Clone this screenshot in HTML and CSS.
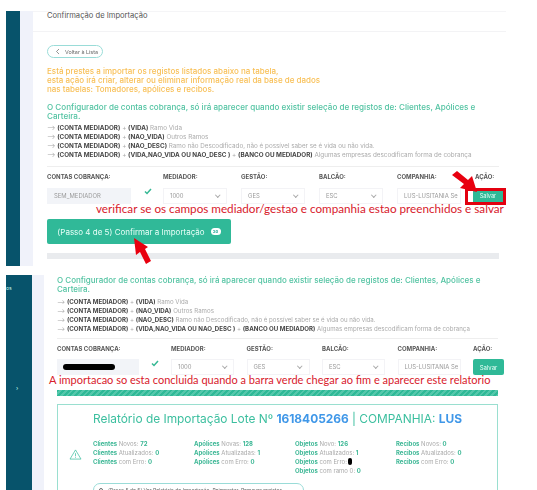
FILE: index.html
```html
<!DOCTYPE html>
<html lang="pt">
<head>
<meta charset="utf-8">
<title>Confirmação de Importação</title>
<link rel="stylesheet" href="styles.css">
</head>
<body>
<main class="page">
  <section class="shot shot-a">
    <div class="side side-a"></div>
    <div class="main-col">
      <header class="head">Confirmação de Importação</header>
      <div class="body body-a">
        <button class="back"><svg width="6" height="7" viewBox="0 0 6 7"><path d="M4 1 1.5 3.5 4 6" fill="none" stroke="#666" stroke-width=".7"/></svg><span>Voltar à Lista</span></button>
        <p class="warn">Está prestes a importar os registos listados abaixo na tabela,<br>esta ação irá criar, alterar ou eliminar informação real da base de dados<br>nas tabelas: Tomadores, apólices e recibos.</p>
        <p class="info">O Configurador de contas cobrança, só irá aparecer quando existir seleção de registos de: Clientes, Apólices e<br>Carteira.</p>
        <ul class="rules">
          <li>--&gt; <b>(CONTA MEDIADOR)</b> + <b>(VIDA)</b> Ramo Vida</li>
          <li>--&gt; <b>(CONTA MEDIADOR)</b> + <b>(NAO_VIDA)</b> Outros Ramos</li>
          <li>--&gt; <b>(CONTA MEDIADOR)</b> + <b>(NAO_DESC)</b> Ramo não Descodificado, não é possível saber se é vida ou não vida.</li>
          <li>--&gt; <b>(CONTA MEDIADOR)</b> + <b>(VIDA,NAO_VIDA OU NAO_DESC )</b> + <b>(BANCO OU MEDIADOR)</b> Algumas empresas descodificam forma de cobrança</li>
        </ul>
        <div class="form form-a">
          <div class="field f-conta"><label>CONTAS COBRANÇA:</label><div class="input filled">SEM_MEDIADOR</div></div>
          <svg class="check" width="8" height="7" viewBox="0 0 8 7"><path d="M1 3.5 3 5.5 7 1" fill="none" stroke="#35b894" stroke-width="1.5"/></svg>
          <div class="field f-sel"><label>MEDIADOR:</label><div class="input">1000<i class="chev"></i></div></div>
          <div class="field f-sel"><label>GESTÃO:</label><div class="input">GES<i class="chev"></i></div></div>
          <div class="field f-sel"><label>BALCÃO:</label><div class="input">ESC<i class="chev"></i></div></div>
          <div class="field f-sel"><label>COMPANHIA:</label><div class="input">LUS-LUSITANIA Se</div></div>
          <div class="field f-act"><label>AÇÃO:</label><div class="save-mark"><span class="save-gap"></span><span class="save-flat">Salvar</span></div></div>
        </div>
        <button class="confirm">(Passo 4 de 5) Confirmar a Importação <span class="pill">20</span></button>
        <div class="track"></div>
      </div>
    </div>
  </section>

  <section class="shot shot-b">
    <div class="side side-b"><span class="side-txt">os</span><span class="side-arrow">›</span></div>
    <div class="main-col">
      <div class="body body-b">
        <p class="info">O Configurador de contas cobrança, só irá aparecer quando existir seleção de registos de: Clientes, Apólices e<br>Carteira.</p>
        <ul class="rules">
          <li>--&gt; <b>(CONTA MEDIADOR)</b> + <b>(VIDA)</b> Ramo Vida</li>
          <li>--&gt; <b>(CONTA MEDIADOR)</b> + <b>(NAO_VIDA)</b> Outros Ramos</li>
          <li>--&gt; <b>(CONTA MEDIADOR)</b> + <b>(NAO_DESC)</b> Ramo não Descodificado, não é possível saber se é vida ou não vida.</li>
          <li>--&gt; <b>(CONTA MEDIADOR)</b> + <b>(VIDA,NAO_VIDA OU NAO_DESC )</b> + <b>(BANCO OU MEDIADOR)</b> Algumas empresas descodificam forma de cobrança</li>
        </ul>
        <div class="form form-b">
          <div class="field f-conta"><label>CONTAS COBRANÇA:</label><div class="input filled"><span class="redact"></span></div></div>
          <svg class="check" width="8" height="7" viewBox="0 0 8 7"><path d="M1 3.5 3 5.5 7 1" fill="none" stroke="#35b894" stroke-width="1.5"/></svg>
          <div class="field f-sel"><label>MEDIADOR:</label><div class="input">1000<i class="chev"></i></div></div>
          <div class="field f-sel"><label>GESTÃO:</label><div class="input">GES<i class="chev"></i></div></div>
          <div class="field f-sel"><label>BALCÃO:</label><div class="input">ESC<i class="chev"></i></div></div>
          <div class="field f-sel"><label>COMPANHIA:</label><div class="input">LUS-LUSITANIA Se</div></div>
          <div class="field f-act"><label>AÇÃO:</label><button class="save">Salvar</button></div>
        </div>
        <div class="stripes"></div>
        <div class="report">
          <h2>Relatório de Importação Lote Nº <strong>1618405266</strong> | COMPANHIA: <strong>LUS</strong></h2>
          <div class="stats">
            <svg class="alert" width="13" height="11" viewBox="0 0 14 12"><path d="M7 1 13 11H1Z M7 4.5V8 M7 9V9.8" fill="none" stroke="#3cbf9f" stroke-width=".8"/></svg>
            <div class="col"><p><b>Clientes</b> Novos: <b>72</b></p><p><b>Clientes</b> Atualizados: <b>0</b></p><p><b>Clientes</b> com Erro: <b>0</b></p></div>
            <div class="col"><p><b>Apólices</b> Novas: <b>128</b></p><p><b>Apólices</b> Atualizadas: <b>1</b></p><p><b>Apólices</b> com Erro: <b>0</b></p></div>
            <div class="col"><p><b>Objetos</b> Novo: <b>126</b></p><p><b>Objetos</b> Atualizados: <b>1</b></p><p><b>Objetos</b> com Erro:<span class="blot"></span></p><p><b>Objetos</b> com ramo 0: <b>0</b></p></div>
            <div class="col"><p><b>Recibos</b> Novos: <b>0</b></p><p><b>Recibos</b> Atualizados: <b>0</b></p><p><b>Recibos</b> com Erro: <b>0</b></p></div>
          </div>
          <button class="next"><span class="ring"></span>(Passo 5 de 5) Ver Relatório de Importação, Reimportar, Remover registos</button>
        </div>
      </div>
    </div>
  </section>

  <p class="note note-a">verificar se os campos mediador/gestao e companhia estao preenchidos e salvar</p>
  <p class="note note-b">A importacao so esta concluida quando a barra verde chegar ao fim e aparecer este relatorio</p>

  <svg class="arrow arrow-a" width="30" height="28" viewBox="0 0 30 28"><path d="M0 4 5 0 16 9 20 5 25 21 8 17 12 13Z" fill="#e8000f"/></svg>
  <svg class="arrow arrow-b" width="22" height="30" viewBox="0 0 22 30"><path d="M1 1 15 10 12 12 18 24 13 27 7 15 3 18Z" fill="#e8000f"/></svg>
</main>
</body>
</html>
```
FILE: styles.css
```css
* { box-sizing: border-box; }
html, body { margin: 0; height: 490px; overflow: hidden; background: #fff; }
body { font-family: Inter, "Liberation Sans", sans-serif; color: #555; }
p, ul, h2 { margin: 0; padding: 0; }
ul { list-style: none; }
button { font-family: inherit; border: 0; padding: 0; }

.page { position: relative; width: 537px; height: 490px; overflow: hidden; padding: 11px 0 0 6px; }

.shot { display: flex; background: #f0f2fa; }
.shot-a { width: 500px; height: 255px; }
.shot-b { width: 531px; height: 215px; margin-top: 9px; background: #fff; }

.side { flex: none; background: #07536b; position: relative; color: #cfe; }
.side-a { width: 14px; margin-right: 13px; }
.side-b { width: 26px; margin-right: 12px; box-shadow: 12px 0 0 #f0f2fa; }
.side-txt { position: absolute; left: 0; top: 10px; font-size: 5px; }
.side-arrow { position: absolute; left: 10px; top: 109px; font-size: 6px; }

.main-col { flex: 1; min-width: 0; background: #fff; }

.head { height: 21px; padding: 0 14px; font-size: 7.6px; line-height: 7px; color: #555; border-top: 1px solid #f5f5f7; border-bottom: 1px solid #f3f3f5; }

.body { filter: blur(.3px); }
.body-a { padding: 13px 7px 0 14px; }
.body-b { padding: 1px 39px 0 13px; }

.back { display: flex; align-items: center; gap: 4px; width: 56px; height: 13px; padding-left: 7px; border: 1px solid #9adcd8; border-radius: 7px; background: #fff; font-size: 5.4px; color: #666; }

.warn { margin-top: 9px; font-size: 8px; line-height: 9px; color: #f8bf55; font-weight: 500; white-space: nowrap; }
.info { margin-top: 9px; font-size: 8.1px; line-height: 9px; color: #52c3a2; font-weight: 500; white-space: nowrap; }
.body-b .info { margin-top: 0; font-size: 8px; }
.rules { margin-top: 3px; font-size: 6.3px; line-height: 9px; color: #aaa; white-space: nowrap; }
.body-b .rules { font-size: 6.14px; }
.rules b { color: #444; font-weight: 700; }

.form { display: flex; align-items: flex-start; border-top: 1px solid #eee; margin-top: 6px; padding-top: 6px; }
.form-b { margin-top: 5px; }
.field { flex: none; }
.field label { display: block; height: 15px; font-size: 6px; line-height: 8px; font-weight: 700; color: #555; white-space: nowrap; }
.form-b .field label { height: 14px; }
.input { position: relative; height: 16px; padding-left: 6px; border: 1px solid #f3f3f6; font-size: 5.9px; line-height: 14px; color: #999; white-space: nowrap; overflow: hidden; }
.input.filled { background: #f2f4f8; border-color: #f2f4f8; }
.redact { display: block; width: 52px; height: 6px; margin: 4px 0 0 -1px; background: #000; border-radius: 3px; }
.chev { position: absolute; right: 7px; top: 4px; width: 3.5px; height: 3.5px; border: solid #aaa; border-width: 0 .6px .6px 0; transform: rotate(45deg); }
.check { flex: none; margin-top: 15px; }

.form-a .f-conta { width: 84px; }
.form-a .check { margin-left: 13px; margin-right: 11px; }
.form-a .f-sel { width: 64px; margin-right: 14px; }
.form-b .f-conta { width: 82px; }
.form-b .check { margin-left: 12px; margin-right: 12px; }
.form-b .f-sel { width: 63px; margin-right: 12.5px; }
.f-act { width: 31px; }

.save-mark { display: flex; width: 41px; height: 17px; margin-left: -10px; border: 3px solid #e3000f; background: #fff; }
.save-gap { width: 5px; }
.save-flat { flex: 1; background: #2fb997; color: #e8fff8; font-size: 5.6px; line-height: 11px; text-align: center; }
.save { display: block; width: 31px; height: 16px; background: #2fb997; border-radius: 2px; color: #eafff8; font-size: 6px; }

.confirm { display: flex; align-items: center; justify-content: center; gap: 6px; width: 184px; height: 25px; margin-top: 14px; background: #30b998; border-radius: 2px; color: #e8fff8; font-size: 8px; }
.pill { width: 10px; height: 7px; border-radius: 4px; background: #fff; color: #2a9; font-size: 4px; line-height: 7px; text-align: center; font-weight: 700; }
.track { width: 452px; height: 6px; margin-top: 9px; background: #e9ebee; }

.stripes { height: 6px; margin-top: 15px; background: repeating-linear-gradient(135deg, #2fb997 0 2px, #55c7ab 2px 4px); }

.report { height: 90px; margin-top: 8px; padding: 6px 0 0 35px; border: 1px solid #9adfd0; }
.report h2 { font-size: 11.9px; line-height: 16px; font-weight: 400; color: #3cbf9f; white-space: nowrap; }
.report h2 strong { color: #3f97e8; font-weight: 700; }
.stats { position: relative; display: flex; margin-top: 12px; font-size: 6px; line-height: 9px; color: #aaa; }
.stats .col { width: 102.5px; white-space: nowrap; }
.stats b { color: #3cb795; font-weight: 700; }
.alert { position: absolute; left: -24px; top: 10px; }
.blot { display: inline-block; width: 4px; height: 7px; margin-left: 1px; vertical-align: -1px; background: #000; border-radius: 2px; }
.next { display: flex; align-items: center; gap: 5px; height: 14px; margin: 8px 0 0 0; padding: 0 5px; width: 211px; border: 1px solid #9adcd8; border-radius: 7px; background: #fff; font-size: 5px; color: #666; white-space: nowrap; overflow: hidden; }
.ring { flex: none; width: 4px; height: 4px; border: .6px solid #666; border-radius: 50%; }

.note { position: absolute; margin: 0; font-family: Lato, "Open Sans", sans-serif; line-height: 13px; color: #d8202c; white-space: nowrap; }
.note-a { left: 96px; top: 202px; font-size: 11.7px; }
.note-b { left: 49px; top: 373px; font-size: 11px; }

.arrow { position: absolute; }
.arrow-a { left: 452px; top: 171px; }
.arrow-b { left: 133px; top: 237px; }
```
